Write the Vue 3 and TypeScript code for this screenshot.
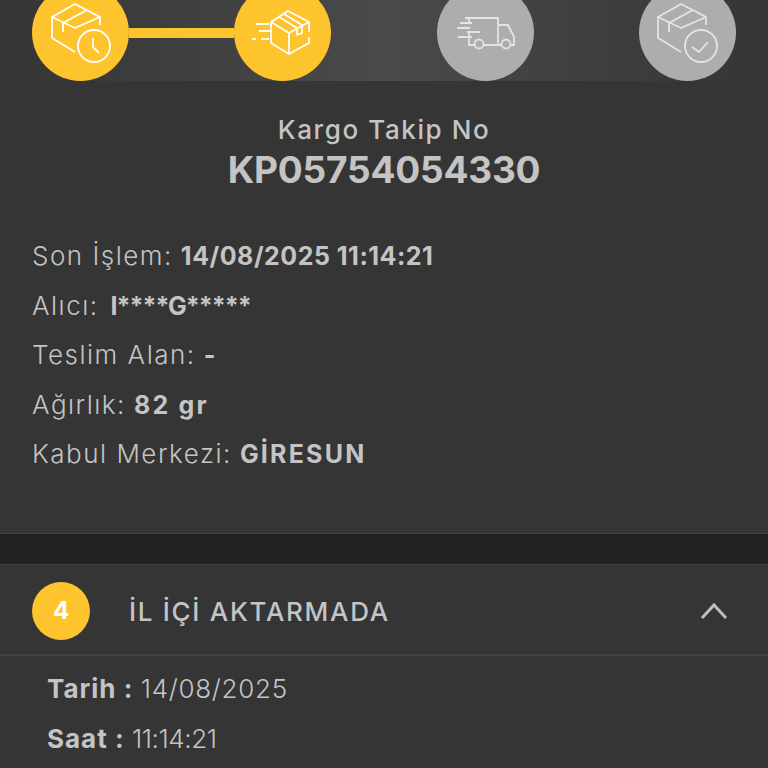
<script setup lang="ts">
interface Row {
  label: string
  value: string
  kind: string
}

const rows: Row[] = [
  { label: 'Son İşlem:', value: '14/08/2025 11:14:21', kind: 'date' },
  { label: 'Alıcı:', value: 'I****G*****', kind: 'masked' },
  { label: 'Teslim Alan:', value: '-', kind: 'word' },
  { label: 'Ağırlık:', value: '82 gr', kind: 'word' },
  { label: 'Kabul Merkezi:', value: 'GİRESUN', kind: 'word' },
]
</script>

<template>
  <div class="page">
    <section class="summary">
      <div class="stepper">
        <div class="step done">
          <svg viewBox="32 -16 97 97" class="icon">
            <path d="M52 38V17L75 4l25 13v8M52 17l23 11 25-11M63 23 87 10M63 23v9M52 38l23 14" />
            <circle cx="94" cy="46" r="16" />
            <path d="M93 38v9l6 6" />
          </svg>
        </div>
        <div class="bar" />
        <div class="step done">
          <svg viewBox="235 -16 97 97" class="icon">
            <path d="M310 32V22L289 11l-17 11v21l18 11 20-11v-6M272 22l18 11 20-11M290 33v21M280 17l18 11M285 14l18 11v8l-5 2v-7" />
            <path d="M257 24h13M260 31h11M253 39h4M262 39h8" />
          </svg>
        </div>
        <div class="bar off" />
        <div class="step">
          <svg viewBox="437 -16 97 97" class="icon">
            <path d="M465 18h33v27h-13M498 25h10l6 12v8h-3M483 45h18M469 18v5M469 33v12h6M460 23h12M457 28h13M467 32h13M458 37h14" />
            <circle cx="479" cy="44" r="4.5" />
            <circle cx="506" cy="44" r="4.5" />
          </svg>
        </div>
        <div class="bar off" />
        <div class="step">
          <svg viewBox="640 -16 97 97" class="icon">
            <path d="M659 38V17L682 4l25 13v8M659 17l23 11 25-11M670 23l24-13M670 23v9M659 38l23 14" />
            <circle cx="702" cy="46" r="16" />
            <path d="M693 47l7 5 9-10" />
          </svg>
        </div>
      </div>

      <div class="tracking">
        <p class="tracking-label">Kargo Takip No</p>
        <p class="tracking-no">KP05754054330</p>
      </div>

      <ul class="details">
        <li v-for="row in rows" :key="row.label">
          <span class="label" :class="row.kind">{{ row.label }}</span>
          <b :class="row.kind">{{ row.value }}</b>
        </li>
      </ul>
    </section>

    <div class="divider" />

    <section class="status">
      <header class="status-head">
        <span class="badge">4</span>
        <h2>İL İÇİ AKTARMADA</h2>
        <svg class="chevron" viewBox="0 0 28 18">
          <path d="M2 16 14 3l12 13" />
        </svg>
      </header>
      <div class="status-body">
        <p><b>Tarih :</b> <span class="date-value">14/08/2025</span></p>
        <p><b>Saat :</b> <span class="time-value">11:14:21</span></p>
      </div>
    </section>
  </div>
</template>

<style>
html,
body {
  margin: 0;
  background: #353535;
  overflow: hidden;
}
</style>

<style scoped>
.page {
  width: 768px;
  height: 768px;
  overflow: hidden;
  background: #353535;
  color: #c4c4c4;
  font-family: "Inter", "Noto Sans", sans-serif;
}

.summary {
  height: 533px;
  box-sizing: border-box;
}

.stepper {
  display: flex;
  align-items: center;
  height: 81px;
  padding: 0 32px;
  box-sizing: border-box;
  background: linear-gradient(90deg, #353535 0%, #4a4a4a 50%, #353535 100%);
}

.step {
  flex: none;
  width: 97px;
  height: 97px;
  margin-top: -16px;
  border-radius: 50%;
  background: #adadad;
}

.step.done {
  background: #fec42d;
}

.bar {
  flex: 1;
  height: 10px;
  margin-top: -15px;
  background: #fec42d;
}

.bar.off {
  background: transparent;
}

.icon {
  display: block;
  width: 97px;
  height: 97px;
  fill: none;
  stroke: #fff;
  stroke-width: 1.8;
  stroke-linejoin: round;
}

.step:not(.done) .icon {
  stroke: #e4e4e4;
}

.tracking {
  padding-top: 34px;
  text-align: center;
}

.tracking-label {
  margin: 0;
  font-size: 26px;
  line-height: 30px;
  font-weight: 500;
  letter-spacing: 1.6px;
}

.tracking-no {
  margin: 3px 0 0;
  font-size: 37px;
  line-height: 44px;
  font-weight: 700;
  letter-spacing: -0.2px;
}

.details {
  margin: 0;
  padding: 39px 32px 0;
  list-style: none;
}

.details li {
  height: 49.5px;
  line-height: 49.5px;
  white-space: nowrap;
}

.label {
  margin-right: 8px;
  font-size: 26px;
  font-weight: 300;
  letter-spacing: 1.5px;
}

.label.masked {
  margin-right: 12px;
}

.details b {
  font-size: 25px;
  font-weight: 700;
}

.details b.date {
  letter-spacing: 0.5px;
}

.details b.masked {
  letter-spacing: -1px;
}

.details b.word {
  letter-spacing: 2.2px;
}

.divider {
  height: 32px;
  background: #222;
  border-top: 1px solid #424242;
  border-bottom: 1px solid #424242;
  box-sizing: border-box;
}

.status-head {
  display: flex;
  align-items: center;
  height: 91px;
  padding: 3px 40px 0 32px;
  box-sizing: border-box;
  border-bottom: 2px solid #424242;
}

.badge {
  flex: none;
  width: 58px;
  height: 58px;
  border-radius: 50%;
  background: #fec42d;
  color: #fff;
  font-size: 24px;
  font-weight: 700;
  line-height: 58px;
  text-align: center;
}

.status-head h2 {
  flex: 1;
  margin: 0 0 0 39px;
  font-size: 26px;
  font-weight: 500;
  letter-spacing: 1.7px;
}

.chevron {
  width: 28px;
  height: 18px;
  fill: none;
  stroke: #bdbdbd;
  stroke-width: 3;
}

.status-body {
  padding: 8px 47px 0;
  font-size: 26px;
}

.status-body p {
  margin: 0;
  height: 50px;
  line-height: 50px;
  font-weight: 300;
  white-space: nowrap;
}

.status-body b {
  font-weight: 700;
  letter-spacing: 1px;
}

.date-value {
  letter-spacing: 0.7px;
}

.time-value {
  letter-spacing: -0.4px;
}
</style>
